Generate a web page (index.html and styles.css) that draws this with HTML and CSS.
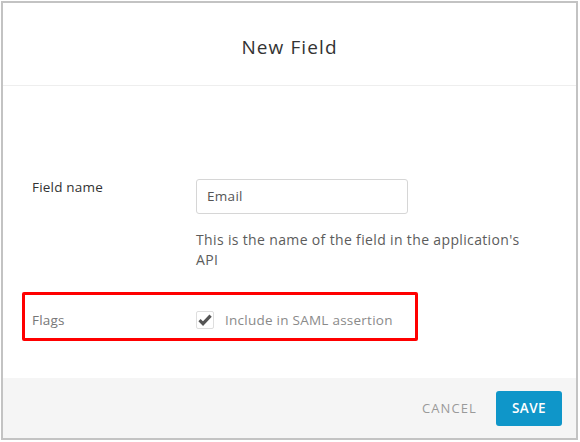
FILE: index.html
```html
<!DOCTYPE html>
<html>
<head>
<meta charset="utf-8">
<link rel="stylesheet" href="styles.css">
</head>
<body>
<div class="frame">
  <div class="header"><h1 class="title">New Field</h1></div>
  <div class="content">
    <div class="row row-name">
      <div class="label">Field name</div>
      <div class="control">
        <div class="input">Email</div>
        <p class="help">This is the name of the field in the application's API</p>
      </div>
    </div>
    <div class="row row-flags">
      <div class="label label-flags">Flags</div>
      <div class="control check-wrap">
        <span class="checkbox">
          <svg width="14" height="12" viewBox="0 0 14 12"><path d="M1.5 6.2 L5 9.6 L12.6 1.6" fill="none" stroke="#555" stroke-width="3.2"/></svg>
        </span>
        <span class="check-label">Include in SAML assertion</span>
      </div>
    </div>
  </div>
  <div class="footer">
    <span class="cancel">CANCEL</span>
    <span class="save">SAVE</span>
  </div>
</div>
</body>
</html>
```
FILE: styles.css
```css
html, body { margin: 0; padding: 0; background: #fff; }
body { font-family: "Open Sans", "Liberation Sans", sans-serif; color: #333; }
.frame {
  box-sizing: border-box;
  margin: 1px 0 0 1px;
  width: 577px;
  height: 439px;
  border: 2px solid #c3c3c3;
  display: flex;
  flex-direction: column;
}
.header {
  height: 82px;
  border-bottom: 1px solid #eeeeee;
  display: flex;
  align-items: center;
  justify-content: center;
}
.title { margin: 0; font-weight: 400; font-size: 19px; letter-spacing: 1.1px; color: #333; padding-top: 6px; }
.content { flex: 1; padding-top: 93px; }
.row { display: flex; }
.label { width: 164px; padding-left: 29px; font-size: 13.5px; letter-spacing: 0.2px; color: #333; line-height: 20px; }
.row-name .label { margin-top: -2px; }
.control { flex: 1; }
.input {
  box-sizing: border-box;
  width: 212px; height: 35px;
  border: 1px solid #d6d6d6; border-radius: 3px;
  padding: 0 10px; line-height: 33px;
  font-size: 13.5px; letter-spacing: 0.3px; color: #555;
}
.help { margin: 16px 0 0; width: 330px; font-size: 14px; letter-spacing: 0.35px; line-height: 20px; color: #5c5c5c; }
.row-flags {
  margin: 22px 0 0 19px;
  width: 396px; height: 49px; box-sizing: border-box;
  border: 3px solid #ff0000; border-radius: 2px;
  align-items: center;
  padding-top: 6px;
}
.row-flags .label { width: 164px; padding-left: 7px; color: #777; }
.check-wrap { display: flex; align-items: center; }
.checkbox {
  box-sizing: border-box;
  width: 18px; height: 18px;
  border: 1px solid #dedede; border-radius: 2px;
  display: flex; align-items: center; justify-content: center;
}
.check-label { margin-left: 11px; font-size: 13.5px; letter-spacing: 0.25px; color: #8a8a8a; }
.footer {
  height: 60px;
  background: #f5f5f5;
  display: flex; align-items: center; justify-content: flex-end;
  padding-right: 14px;
}
.cancel { font-size: 13px; color: #9a9a9a; letter-spacing: 1.1px; margin-right: 19px; }
.save {
  width: 66px; height: 35px; border-radius: 3px;
  background: #0f96c9; color: #fff;
  font-size: 13.5px; font-weight: 600; letter-spacing: 0.4px;
  display: flex; align-items: center; justify-content: center;
}
```
